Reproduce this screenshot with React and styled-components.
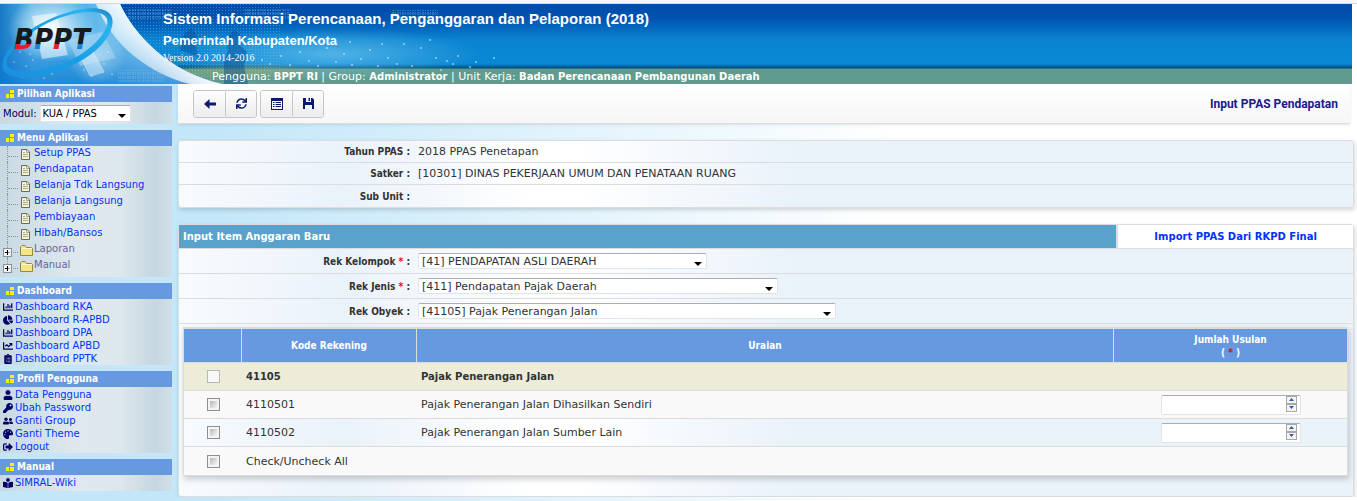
import React, { useState } from 'react';
import styled, { createGlobalStyle } from 'styled-components';
import {
    FaSync, FaChartBar, FaChartPie, FaChartLine, FaClipboardList,
    FaUser, FaKey, FaUserFriends, FaPalette, FaSignOutAlt, FaBookReader,
} from 'react-icons/fa';

/* Data ---------------------------*/
const menuItems = ['Setup PPAS', 'Pendapatan', 'Belanja Tdk Langsung', 'Belanja Langsung', 'Pembiayaan', 'Hibah/Bansos'];
const menuFolders = ['Laporan', 'Manual'];

const dashboardLinks = [
    { icon: FaChartBar, text: 'Dashboard RKA' },
    { icon: FaChartPie, text: 'Dashboard R-APBD' },
    { icon: FaChartBar, text: 'Dashboard DPA' },
    { icon: FaChartLine, text: 'Dashboard APBD' },
    { icon: FaClipboardList, text: 'Dashboard PPTK' },
];

const profileLinks = [
    { icon: FaUser, text: 'Data Pengguna' },
    { icon: FaKey, text: 'Ubah Password' },
    { icon: FaUserFriends, text: 'Ganti Group' },
    { icon: FaPalette, text: 'Ganti Theme' },
    { icon: FaSignOutAlt, text: 'Logout' },
];

const manualLinks = [{ icon: FaBookReader, text: 'SIMRAL-Wiki' }];

const infoRows = [
    { label: 'Tahun PPAS', value: '2018 PPAS Penetapan' },
    { label: 'Satker', value: '[10301] DINAS PEKERJAAN UMUM DAN PENATAAN RUANG' },
    { label: 'Sub Unit', value: '' },
];

const selectRows = [
    { id: 'kelompok', label: 'Rek Kelompok', required: true, value: '[41] PENDAPATAN ASLI DAERAH', width: 289 },
    { id: 'jenis', label: 'Rek Jenis', required: true, value: '[411] Pendapatan Pajak Daerah', width: 360 },
    { id: 'obyek', label: 'Rek Obyek', required: false, value: '[41105] Pajak Penerangan Jalan', width: 418 },
];

const accounts = [
    { code: '4110501', name: 'Pajak Penerangan Jalan Dihasilkan Sendiri' },
    { code: '4110502', name: 'Pajak Penerangan Jalan Sumber Lain' },
];

/* Drawings ---------------------------*/
const stars = [
    [262, 56], [270, 60], [281, 52], [290, 61], [300, 48], [309, 57], [318, 62], [327, 44], [336, 58], [344, 50],
    [352, 61], [361, 55], [370, 46], [378, 62], [388, 54], [397, 60], [404, 40], [412, 62], [421, 44], [430, 36],
    [436, 54], [447, 57], [453, 60], [458, 52], [470, 63], [476, 58], [494, 54], [382, 40], [350, 38], [441, 66],
];

const dust = [
    [8, 50], [14, 58], [20, 48], [26, 62], [33, 56], [38, 68], [12, 70], [22, 73], [44, 74], [6, 62], [30, 50], [52, 70],
    [84, 66], [92, 72], [104, 60], [112, 70], [108, 48],
];

const Banner = () => (
    <BannerArt viewBox="0 0 500 80" aria-hidden="true">
        <defs>
            <linearGradient id="sweep" x1="0" y1="0" x2="1" y2="0">
                <stop offset="0" stopColor="#1878c4" />
                <stop offset="0.15" stopColor="#58b4e8" />
                <stop offset="0.35" stopColor="#4cb0e8" />
                <stop offset="0.6" stopColor="#8accf0" />
                <stop offset="1" stopColor="#e4f2fa" />
            </linearGradient>
            <linearGradient id="depth" x1="0" y1="0" x2="0" y2="1">
                <stop offset="0.3" stopColor="#0c78d0" stopOpacity="0" />
                <stop offset="1" stopColor="#0c78d0" stopOpacity="0.7" />
            </linearGradient>
            <radialGradient id="glow">
                <stop offset="0" stopColor="#fff" stopOpacity="0.9" />
                <stop offset="1" stopColor="#fff" stopOpacity="0" />
            </radialGradient>
            <linearGradient id="rim" x1="0" y1="1" x2="1" y2="0.3">
                <stop offset="0" stopColor="#fff" stopOpacity="0" />
                <stop offset="0.6" stopColor="#fff" stopOpacity="0.9" />
            </linearGradient>
            <radialGradient id="mist">
                <stop offset="0" stopColor="#7fd0f4" stopOpacity="0.6" />
                <stop offset="1" stopColor="#7fd0f4" stopOpacity="0" />
            </radialGradient>
            <radialGradient id="olive">
                <stop offset="0" stopColor="#8aa878" stopOpacity="0.8" />
                <stop offset="1" stopColor="#8aa878" stopOpacity="0" />
            </radialGradient>
            <pattern id="dots" width="3" height="3" patternUnits="userSpaceOnUse">
                <rect width="1" height="1" fill="#8fd0f4" opacity="0.35" />
            </pattern>
            <pattern id="bits" width="5" height="4" patternUnits="userSpaceOnUse">
                <path d="M0.500 0v3M2.500 0.500h1.500v2h-1.500z" fill="none" stroke="#8cc0e8" strokeWidth="0.6" opacity="0.5" />
            </pattern>
        </defs>
        <ellipse cx="330" cy="50" rx="150" ry="26" fill="url(#mist)" />
        <ellipse cx="245" cy="68" rx="90" ry="9" fill="url(#olive)" />
        <rect x="110" width="170" height="80" fill="url(#dots)" />
        <rect x="128" y="5" width="44" height="10" fill="url(#bits)" />
        <rect x="244" y="5" width="46" height="10" fill="url(#bits)" />
        <rect x="392" y="6" width="46" height="8" fill="url(#bits)" />
        <path d="M224 80V58l4-12-2-12 9-8 6 6-2 8 8 8-3 14 4 18zM180 46l4-16 7-6 6 7-2 10 4 12z" fill="#064a90" opacity="0.45" />
        <path d="M0 0H120C134 30 168 68 222 80H0Z" fill="url(#sweep)" />
        <path d="M0 0H120C134 30 168 68 222 80H0Z" fill="url(#depth)" />
        <path d="M96 0H120C134 30 168 68 222 80H190C150 70 112 42 96 0Z" fill="url(#rim)" />
        <ellipse cx="52" cy="24" rx="44" ry="34" fill="url(#glow)" />
        <ellipse cx="96" cy="52" rx="30" ry="28" fill="url(#glow)" opacity="0.5" />
        <path d="M32 12l24-3 12 42-26 4z" fill="#fff" opacity="0.5" />
        <path d="M68 36l34-8 14 26-36 8z" fill="#bfe4f8" opacity="0.4" />
        <path d="M80 52l12-6 12 22-14 4z" fill="#d8f0fc" opacity="0.5" stroke="#fff" />
        <rect x="118" y="66" width="46" height="12" fill="url(#bits)" />
        {dust.map(([x, y]) => <circle key={`${x}-${y}`} cx={x} cy={y} r="0.7" fill="#fff" opacity="0.7" />)}
        {stars.map(([x, y]) => <circle key={`${x}-${y}`} cx={x} cy={y} r="1" fill="#b8e6fc" opacity="0.75" />)}
    </BannerArt>
);

const Logo = () => (
    <LogoArt viewBox="0 0 118 80" role="img" aria-label="BPPT">
        <defs>
            <linearGradient id="ring" x1="0" y1="1" x2="1" y2="0">
                <stop offset="0" stopColor="#1c8ede" />
                <stop offset="0.5" stopColor="#18a0e8" />
                <stop offset="0.85" stopColor="#2cb4f0" />
                <stop offset="1" stopColor="#1478c0" />
            </linearGradient>
            <linearGradient id="redFoot" x1="0" y1="22" x2="0" y2="45" gradientUnits="userSpaceOnUse">
                <stop offset="0.78" stopColor="#1a1a1a" />
                <stop offset="0.78" stopColor="#e0202c" />
            </linearGradient>
            <linearGradient id="blueFoot" x1="0" y1="22" x2="0" y2="45" gradientUnits="userSpaceOnUse">
                <stop offset="0.78" stopColor="#1a1a1a" />
                <stop offset="0.78" stopColor="#1484d8" />
            </linearGradient>
        </defs>
        <path
            fillRule="evenodd"
            fill="url(#ring)"
            d="M104 6C121 12 112 38 84 55C56 72 14 80 4 67C-3 56 14 34 40 20C64 7 90 1 104 6ZM102 10C88 5 64 10 42 22C20 35 2 54 8 63C16 72 54 67 80 51C106 34 114 15 102 10Z"
        />
        <text
            x="14"
            y="45"
            fontFamily="DejaVu Sans Condensed, DejaVu Sans, sans-serif"
            fontSize="29"
            fontWeight="bold"
            fontStyle="italic"
        >
            <tspan fill="url(#redFoot)">B</tspan>
            <tspan fill="url(#blueFoot)">P</tspan>
            <tspan fill="url(#redFoot)">P</tspan>
            <tspan fill="url(#blueFoot)">T</tspan>
        </text>
    </LogoArt>
);

const Squares = () => (
    <svg width="9" height="8" viewBox="0 0 9 8" aria-hidden="true">
        <path d="M1 4h3v4H1zM5 4h4v4H5zM5 0h4v3H5z" fill="#fff200" />
    </svg>
);

const PageIcon = () => (
    <svg width="9" height="11" viewBox="0 0 9 11" aria-hidden="true">
        <path d="M0.500 0.500H6L8.500 3V10.500H0.500Z" fill="#f6f3d4" stroke="#6b6b55" />
        <path d="M2 3.500h2M2 5.500h5M2 7.500h5M5.500 1v2.500H8" fill="none" stroke="#a8a890" />
    </svg>
);

const FolderIcon = () => (
    <svg width="13" height="11" viewBox="0 0 13 11" aria-hidden="true">
        <path d="M0.500 10.500V2L2 0.500H5L6.500 2.500H11.500L12.500 3.500V10.500Z" fill="#f4e684" stroke="#96883c" />
        <path d="M1.500 3.500H11.500" stroke="#fffbd0" />
    </svg>
);

const PlusBox = () => (
    <svg width="9" height="9" viewBox="0 0 9 9" aria-hidden="true">
        <rect x="0.5" y="0.5" width="8" height="8" fill="#eef2f4" stroke="#8c9298" />
        <path d="M2 4.500h5M4.500 2v5" stroke="#000" />
    </svg>
);

const BackIcon = () => (
    <svg width="12" height="10" viewBox="0 0 12 10" aria-hidden="true">
        <path d="M0 5L5.500 0V3.500H12V6.500H5.500V10Z" fill="currentColor" />
    </svg>
);

const ListIcon = () => (
    <svg width="12" height="12" viewBox="0 0 12 12" aria-hidden="true">
        <path fillRule="evenodd" fill="currentColor" d="M0 0H12V12H0ZM1 3V11H11V3Z" />
        <path d="M2 4.500h1.500M4.500 4.500h5.500M2 6.500h1.500M4.500 6.500h5.500M2 8.500h1.500M4.500 8.500h5.500" stroke="currentColor" />
    </svg>
);

const SaveIcon = () => (
    <svg width="11" height="11" viewBox="0 0 11 11" aria-hidden="true">
        <path fillRule="evenodd" fill="currentColor" d="M0 0H3V4H8V0H9.500L11 1.500V11H9V7H2V11H0ZM5.500 0H7V3H5.500Z" />
    </svg>
);

/* Components ---------------------------*/
const SidePanel = ({ title, children }) => (
    <section>
        <PanelTitle><Squares />{title}</PanelTitle>
        {children}
    </section>
);

const LinkPanel = ({ title, links }) => (
    <SidePanel title={title}>
        <LinkList>
            {links.map(({ icon: Icon, text }) => (
                <li key={text}>
                    <Icon />
                    <a href="#">{text}</a>
                </li>
            ))}
        </LinkList>
    </SidePanel>
);

const Amount = ({ label }) => {
    const [value, setValue] = useState('');
    const step = (by) => setValue(String(Number(value) + by));

    return (
        <AmountBox>
            <input type="number" aria-label={label} value={value} onChange={(e) => setValue(e.target.value)} />
            <Stepper>
                <button type="button" aria-label="Tambah" onClick={() => step(1)}>
                    <svg width="5" height="3" viewBox="0 0 5 3"><path d="M0 3L2.500 0L5 3Z" fill="#4058a8" /></svg>
                </button>
                <button type="button" aria-label="Kurang" onClick={() => step(-1)}>
                    <svg width="5" height="3" viewBox="0 0 5 3"><path d="M0 0L2.500 3L5 0Z" fill="#4058a8" /></svg>
                </button>
            </Stepper>
        </AmountBox>
    );
};

const App = () => {
    const [checked, setChecked] = useState([]);
    const allChecked = checked.length === accounts.length;

    const toggle = (code) => {
        setChecked(checked.includes(code) ? checked.filter((c) => c !== code) : [...checked, code]);
    };

    return (
        <>
            <GlobalStyle />
            <TopEdge />
            <Header>
                <Banner />
                <Logo />
                <Titles>
                    <h1>Sistem Informasi Perencanaan, Penganggaran dan Pelaporan (2018)</h1>
                    <h2>Pemerintah Kabupaten/Kota</h2>
                    <small>Version 2.0 2014-2016</small>
                </Titles>
                <UserBar>
                    Pengguna: <b>BPPT RI</b> | Group: <b>Administrator</b> | Unit Kerja: <b>Badan Perencanaan Pembangunan Daerah</b>
                </UserBar>
            </Header>

            <Page>
                <Sidebar>
                    <SidePanel title="Pilihan Aplikasi">
                        <Module>
                            <label htmlFor="modul">Modul:</label>
                            <ModuleSelect id="modul"><option>KUA / PPAS</option></ModuleSelect>
                        </Module>
                    </SidePanel>
                    <SidePanel title="Menu Aplikasi">
                        <Tree>
                            {menuItems.map((text) => (
                                <TreeItem key={text}>
                                    <PageIcon />
                                    <a href="#">{text}</a>
                                </TreeItem>
                            ))}
                            {menuFolders.map((text, i) => (
                                <TreeItem key={text} $folder $last={i === menuFolders.length - 1}>
                                    <PlusBox />
                                    <FolderIcon />
                                    <a href="#">{text}</a>
                                </TreeItem>
                            ))}
                        </Tree>
                    </SidePanel>
                    <LinkPanel title="Dashboard" links={dashboardLinks} />
                    <LinkPanel title="Profil Pengguna" links={profileLinks} />
                    <LinkPanel title="Manual" links={manualLinks} />
                </Sidebar>

                <Main>
                    <Toolbar>
                        <ButtonGroup>
                            <ToolButton aria-label="Kembali"><BackIcon /></ToolButton>
                            <ToolButton aria-label="Muat ulang"><FaSync /></ToolButton>
                        </ButtonGroup>
                        <ButtonGroup>
                            <ToolButton aria-label="Daftar"><ListIcon /></ToolButton>
                            <ToolButton aria-label="Simpan"><SaveIcon /></ToolButton>
                        </ButtonGroup>
                        <PageName>Input PPAS Pendapatan</PageName>
                    </Toolbar>

                    <Card>
                        {infoRows.map(({ label, value }) => (
                            <Field key={label}>
                                <Label as="span">{label} :</Label>
                                <span>{value}</span>
                            </Field>
                        ))}
                    </Card>

                    <Card>
                        <CardHead>
                            <h3>Input Item Anggaran Baru</h3>
                            <a href="#">Import PPAS Dari RKPD Final</a>
                        </CardHead>
                        {selectRows.map(({ id, label, required, value, width }) => (
                            <Field key={id} $tall>
                                <Label htmlFor={id}>{label} {required && <Star>*</Star>} :</Label>
                                <Select id={id} $width={width}><option>{value}</option></Select>
                            </Field>
                        ))}
                        <Grid>
                            <colgroup>
                                <col width="58" />
                                <col width="175" />
                                <col />
                                <col width="233" />
                            </colgroup>
                            <thead>
                                <tr>
                                    <th aria-label="Pilih" />
                                    <th>Kode Rekening</th>
                                    <th>Uraian</th>
                                    <th>Jumlah Usulan<br />( <Star $dark>*</Star> )</th>
                                </tr>
                            </thead>
                            <tbody>
                                <GroupRow>
                                    <td><Check type="checkbox" disabled aria-label="41105" /></td>
                                    <td>41105</td>
                                    <td colSpan="2">Pajak Penerangan Jalan</td>
                                </GroupRow>
                                {accounts.map(({ code, name }, i) => (
                                    <Row key={code} $clear={i % 2 === 1}>
                                        <td>
                                            <Check
                                                type="checkbox"
                                                aria-label={code}
                                                checked={checked.includes(code)}
                                                onChange={() => toggle(code)}
                                            />
                                        </td>
                                        <td>{code}</td>
                                        <td>{name}</td>
                                        <td><Amount label={`Jumlah Usulan ${code}`} /></td>
                                    </Row>
                                ))}
                                <Row>
                                    <td>
                                        <Check
                                            id="all"
                                            type="checkbox"
                                            checked={allChecked}
                                            onChange={() => setChecked(allChecked ? [] : accounts.map((a) => a.code))}
                                        />
                                    </td>
                                    <td colSpan="3"><label htmlFor="all">Check/Uncheck All</label></td>
                                </Row>
                            </tbody>
                        </Grid>
                    </Card>
                </Main>
            </Page>
        </>
    );
};

export default App;

/* Styles ---------------------------*/
const condensed = '"DejaVu Sans Condensed", "DejaVu Sans", sans-serif';
const arrow = `url("data:image/svg+xml,%3Csvg xmlns='http://www.w3.org/2000/svg' width='8' height='4'%3E%3Cpath d='M0 0h8L4 4z'/%3E%3C/svg%3E")`;

const GlobalStyle = createGlobalStyle`
    * {
        box-sizing: border-box;
    }

    body {
        margin: 0;
        background: linear-gradient(to right, #c3e7f9 0%, #c3e7f9 16%, #fff 66%);
        background-attachment: fixed;
        font: 10px/13px "DejaVu Sans", sans-serif;
        color: #333;
    }

    a {
        color: #0033ff;
        text-decoration: none;
    }

    h1, h2, h3, ul {
        margin: 0;
        padding: 0;
    }
`;

const TopEdge = styled.div`
    height: 4px;
    background: #f7f7f7;
    border-bottom: 1px solid #d8d8d8;
`;

const Header = styled.header`
    position: relative;
    height: 80px;
    margin-right: 5px;
    overflow: hidden;
    color: #fff;
    background: linear-gradient(#004ba8 0, #0052b0 14px, #0a84d0 36px, #0a88d4 60px, #004c80 64px, #609c8c 65px, #609a90 80px);
`;

const BannerArt = styled.svg`
    position: absolute;
    left: 0;
    top: 0;
    width: 500px;
    height: 80px;
`;

const LogoArt = styled.svg`
    position: absolute;
    left: 0;
    top: 0;
    width: 118px;
    height: 80px;
`;

const Titles = styled.div`
    position: relative;
    display: flex;
    flex-direction: column;
    padding: 4px 0 0 163px;
    font-family: "Liberation Sans", Arial, sans-serif;

    h1 {
        font-size: 15px;
        line-height: 22px;
    }

    h2 {
        font-size: 13px;
        line-height: 22px;
    }

    small {
        font: 10px/12px "Liberation Serif", serif;
    }
`;

const UserBar = styled.div`
    position: relative;
    padding: 6px 0 0 212px;
    font-size: 11px;
    white-space: pre-wrap;

    b {
        font-size: 10px;
    }
`;

const Page = styled.div`
    display: flex;
    align-items: flex-start;
    gap: 6px;
    padding-right: 3px;
`;

const Sidebar = styled.aside`
    flex: 0 0 172px;
    display: flex;
    flex-direction: column;
    gap: 6px;
    padding-top: 2px;
`;

const panelFill = `
    background: linear-gradient(to right, #c8d9e2 0%, #dfe8ee 45%, #dde7ec 70%, #c6d7e0 90%, #d0dfe7 100%);
`;

const PanelTitle = styled.h3`
    display: flex;
    align-items: center;
    gap: 3px;
    height: 16px;
    padding-left: 5px;
    background: #6699df;
    color: #fff;
    font: bold 10px/16px ${condensed};
`;

const Module = styled.div`
    ${panelFill}
    display: flex;
    align-items: center;
    gap: 3px;
    height: 22px;
    padding-left: 3px;
    color: #000066;
`;

const ModuleSelect = styled.select`
    appearance: none;
    width: 91px;
    height: 17px;
    padding: 0 2px;
    border: 1px solid #e0e4ea;
    border-top-color: #abadb3;
    border-radius: 2px;
    background: #fff ${arrow} no-repeat right 4px top 8px;
    color: #000;
    font: 11px/15px ${condensed};
`;

const Tree = styled.ul`
    ${panelFill}
    padding-bottom: 3px;
    list-style: none;
`;

const TreeItem = styled.li`
    position: relative;
    display: flex;
    align-items: center;
    height: 16px;
    padding-left: ${(p) => (p.$folder ? '3px' : '21px')};
    line-height: 14px;

    svg {
        position: relative;
        flex: none;
        margin-top: ${(p) => (p.$folder ? '4px' : '1px')};
        margin-right: ${(p) => (p.$folder ? '0' : '4px')};
    }

    svg + svg {
        margin: 1px 1px 0 8px;
    }

    a {
        margin-bottom: 2px;
        color: ${(p) => (p.$folder ? '#666699' : '#0033ff')};
    }

    &::before {
        content: '';
        position: absolute;
        left: 7px;
        top: 0;
        height: ${(p) => (p.$last ? '10px' : '16px')};
        border-left: 1px dotted #8a949a;
    }

    &::after {
        content: '';
        position: absolute;
        left: 8px;
        top: 10px;
        width: 10px;
        border-top: 1px dotted #8a949a;
    }
`;

const LinkList = styled.ul`
    ${panelFill}
    min-height: 16px;
    padding-top: 1px;
    list-style: none;
    color: #000066;

    li {
        display: flex;
        align-items: center;
        gap: 2px;
        height: 13px;
        padding-left: 3px;
    }
`;

const Main = styled.main`
    flex: 1;
    min-width: 0;
    display: flex;
    flex-direction: column;
    gap: 16px;
`;

const Toolbar = styled.div`
    display: flex;
    align-items: center;
    gap: 3px;
    height: 40px;
    margin-right: 4px;
    padding: 0 12px 0 15px;
    border-bottom: 1px solid #ddd;
    background: linear-gradient(#fff, #f6f6f6);
    box-shadow: 0 1px 3px rgba(0, 0, 0, 0.1);
`;

const ButtonGroup = styled.div`
    display: flex;
    border: 1px solid #c6c6c6;
    border-radius: 3px;
`;

const ToolButton = styled.button`
    display: flex;
    align-items: center;
    justify-content: center;
    width: 31px;
    height: 26px;
    padding: 0;
    border: 0;
    border-radius: 2px;
    background: linear-gradient(#fefefe, #ececec);
    color: #0a1a6e;
    font-size: 11px;

    & + & {
        border-left: 1px solid #c6c6c6;
    }
`;

const PageName = styled.div`
    margin-left: auto;
    color: #1a1a8c;
    font: bold 12px/16px Roboto, sans-serif;
`;

const Card = styled.section`
    border: 1px solid #dcdcdc;
    border-radius: 3px;
    background: linear-gradient(to right, #f8fbfe 0%, #eaf2fa 14%, #fff 30%, #fff 34%, #eaf2fa 52%, #eaf2fa 100%);
    box-shadow: 1px 2px 4px rgba(0, 0, 0, 0.16);
`;

const CardHead = styled.div`
    display: flex;
    height: 24px;
    border-bottom: 1px solid #dcdcdc;
    font-weight: bold;
    line-height: 24px;

    h3 {
        flex: 1;
        padding-left: 4px;
        background: #58a2cb;
        border-right: 2px solid #dcdcdc;
        color: #fff;
        font-size: 10px;
    }

    a {
        flex: 0 0 20%;
        background: #fff;
        text-align: center;
    }
`;

const Field = styled.div`
    display: grid;
    grid-template-columns: 231px 1fr;
    column-gap: 8px;
    align-items: center;
    height: ${(p) => (p.$tall ? '25px' : '22px')};
    border-bottom: 1px solid #dcdcdc;
    font-size: 11px;

    ${Card} > &:last-child {
        border-bottom: 0;
    }
`;

const Label = styled.label`
    font: bold 10px/13px ${condensed};
    text-align: right;
`;

const Star = styled.span`
    color: ${(p) => (p.$dark ? '#cc1111' : '#ff0033')};
`;

const Select = styled.select`
    appearance: none;
    width: ${(p) => p.$width}px;
    max-width: 100%;
    height: 16px;
    padding: 1px 3px 0;
    border: 1px solid #e2e3ea;
    border-top-color: #abadb3;
    border-radius: 2px;
    background: #fff ${arrow} no-repeat right 4px top 8px;
    color: #333;
    font: 11px/13px "DejaVu Sans", sans-serif;
`;

const Grid = styled.table`
    width: calc(100% - 9px);
    margin: 3px 5px 20px 4px;
    border: 1px solid #dcdcdc;
    border-top-width: 2px;
    border-spacing: 0;
    table-layout: fixed;
    box-shadow: 1px 3px 6px rgba(0, 0, 0, 0.2);

    th {
        height: 34px;
        padding: 0;
        border-right: 1px solid #dcdcdc;
        border-bottom: 1px solid #dcdcdc;
        background: #6699df;
        color: #fff;
        font: bold 10px/13px ${condensed};
    }

    th:last-child {
        border-right: 0;
    }

    td {
        height: 28px;
        padding: 0 4px;
        border-bottom: 1px solid #dcdcdc;
        font-size: 11px;
    }

    tr:last-child td {
        border-bottom: 0;
    }

    td:first-child {
        text-align: center;
    }
`;

const Row = styled.tr`
    background: ${(p) => (p.$clear ? 'transparent' : '#f9f9f9')};
`;

const GroupRow = styled.tr`
    background: #ececd8;

    ${Grid} & td {
        font-size: 10px;
        font-weight: bold;
    }
`;

const Check = styled.input`
    appearance: none;
    display: block;
    width: 13px;
    height: 13px;
    margin: 0 auto;
    border: 1px solid #8e8f8f;
    background: linear-gradient(135deg, #b4b8c0, #f6f6f6) content-box, #f4f4f4;
    padding: 2px;

    &:checked {
        background: #3858a8 content-box;
    }

    &:disabled {
        border-color: #b8b8b8;
        background: #f8f8f8;
    }
`;

const AmountBox = styled.div`
    position: relative;
    width: 140px;
    margin: 0 auto;

    input {
        display: block;
        width: 100%;
        height: 20px;
        padding: 0 18px 0 4px;
        border: 1px solid #e2e3ea;
        border-top-color: #abadb3;
        border-radius: 2px;
        background: #fff;
        font: inherit;
        appearance: textfield;
    }

    input::-webkit-inner-spin-button {
        appearance: none;
    }
`;

const Stepper = styled.div`
    position: absolute;
    top: 1px;
    right: 4px;
    display: flex;
    flex-direction: column;

    button {
        display: flex;
        align-items: center;
        justify-content: center;
        width: 11px;
        height: 8px;
        padding: 0;
        border: 1px solid #a8a8a8;
        background: #f4f4f4;
    }
`;
